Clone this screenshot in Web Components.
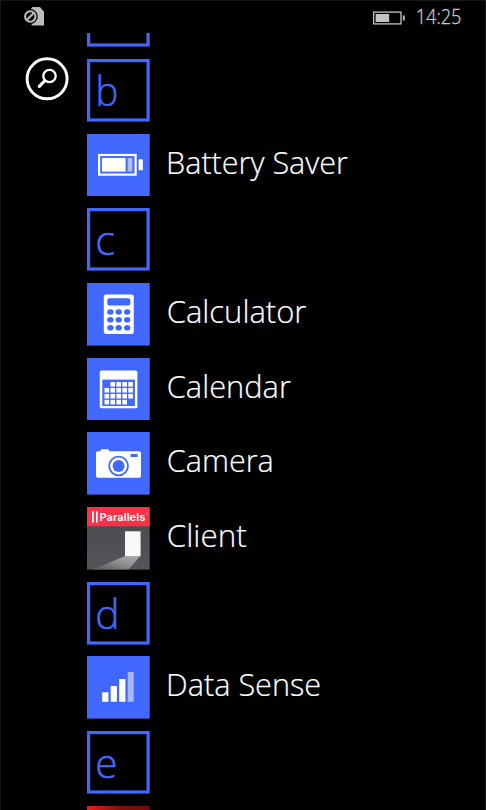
<!DOCTYPE html>
<html lang="en"><head><meta charset="utf-8"><title>Apps</title>
<style>html,body{margin:0;background:#000;height:100%;overflow:hidden}</style></head>
<body>
<phone-screen>
  <status-bar slot="status" time="14:25"></status-bar>
  <search-button slot="side"></search-button>
  <letter-tile></letter-tile>
  <letter-tile letter="b" x="11.3" w="18.2"></letter-tile>
  <app-row label="Battery Saver" x="19" w="178.7" icon="battery"></app-row>
  <letter-tile letter="c" x="10.3" w="16.6"></letter-tile>
  <app-row label="Calculator" w="138.5" icon="calculator"></app-row>
  <app-row label="Calendar" w="123" icon="calendar"></app-row>
  <app-row label="Camera" w="104.5" icon="camera"></app-row>
  <app-row label="Client" w="78.5" icon="client"></app-row>
  <letter-tile letter="d" x="10.3" w="19.4"></letter-tile>
  <app-row label="Data Sense" x="19" w="151" icon="data"></app-row>
  <letter-tile letter="e" x="10.3" w="18.2"></letter-tile>
  <app-row label="" icon="red"></app-row>
</phone-screen>
<script>
const BLUE = '#4068ff';
const dots = () => { let s = ''; for (const y of [29,36.8,44.8]) for (const x of [23.4,31.7,40.2]) s += `<ellipse cx="${x}" cy="${y}" rx="3.2" ry="2.8"/>`; return s; };
const days = () => { let s = ''; for (let r = 0; r < 4; r++) for (let c = 0; c < 5; c++) { if ((r === 0 && c === 0) || (r === 3 && c === 4)) continue; s += `<rect x="${17.5 + c*5.95}" y="${24 + r*5.95}" width="4.6" height="4.6"/>`; } return s; };
const blue = `<rect width="62.7" height="62.6" fill="${BLUE}"/>`;
const ICONS = {
  battery: `${blue}<rect x="12.1" y="21" width="36.5" height="19.6" fill="none" stroke="#fff" stroke-width="2.2"/><rect x="15" y="24" width="23.6" height="13.6" fill="#fff"/><rect x="40.6" y="24" width="4.8" height="13.6" fill="#abbcff"/><rect x="51.6" y="25.3" width="4.2" height="11" rx=".5" fill="#fff"/>`,
  calculator: `${blue}<rect x="16.8" y="11.4" width="30" height="39.6" rx="2.2" fill="#fff"/><g fill="${BLUE}"><rect x="20.3" y="15.2" width="23" height="7.4" rx="2"/>${dots()}</g>`,
  calendar: `${blue}<rect x="12.8" y="12.6" width="37.6" height="37.7" rx="1.6" fill="#fff"/><rect x="15.3" y="21.6" width="32.6" height="26.4" fill="${BLUE}"/><g fill="#fff">${days()}</g>`,
  camera: `${blue}<path fill="#fff" d="M10.7 19.3H13l1.4-2h6.8l1.4 2H52.2q1.8 0 1.8 1.8V44q0 1.8-1.8 1.8H10.8Q9 45.8 9 44V21.1q0-1.8 1.7-1.8z"/><circle cx="31.6" cy="34" r="9.4" fill="none" stroke="${BLUE}" stroke-width="1.8"/><circle cx="31.6" cy="34" r="6" fill="${BLUE}"/><rect x="43.6" y="22" width="7" height="3" fill="${BLUE}"/>`,
  client: `<defs><linearGradient id="wall" x1="0" y1="0" x2="0" y2="1"><stop stop-color="#49484d"/><stop offset="1" stop-color="#55545a"/></linearGradient><linearGradient id="beam" x1="1" y1="0" x2=".1" y2="1"><stop stop-color="#b0aeb0"/><stop offset=".55" stop-color="#8a898c"/><stop offset="1" stop-color="#5b5a5f"/></linearGradient></defs>
    <rect width="62.7" height="62.6" fill="url(#wall)"/><rect width="62.7" height="19.3" fill="#fd3048"/>
    <path d="M38.2 49 6 62.6H41.5L53.3 49z" fill="url(#beam)"/><rect x="38" y="24.3" width="15.6" height="24.7" fill="#f8f8f8"/>
    <path d="M5.9 4.2V15.8M9.8 4.2V15.8" stroke="#fff" stroke-width="1.7"/>
    <text x="12.5" y="14" font-family="Inter,'Liberation Sans',sans-serif" font-size="11" font-weight="600" fill="#fff" textLength="45.8" lengthAdjust="spacingAndGlyphs">Parallels</text><circle cx="59.6" cy="6.4" r=".8" fill="none" stroke="#ffb0b8" stroke-width=".5"/>`,
  data: `${blue}<g fill="#fff"><rect x="15.2" y="36.3" width="6.2" height="9.5"/><rect x="23.7" y="30" width="6.2" height="15.8"/><rect x="32.2" y="23" width="6.2" height="22.8"/><rect x="40.7" y="16" width="6" height="29.8" fill="#a6b8ff"/></g>`,
  red: `<defs><linearGradient id="r"><stop stop-color="#ef1c1c"/><stop offset=".55" stop-color="#7d0d0f"/><stop offset="1" stop-color="#6c0d0e"/></linearGradient></defs><rect width="62.7" height="62.6" fill="url(#r)"/>`
};
const FONT = `font-family="'Open Sans','Noto Sans',sans-serif" font-weight="300"`;
/* Stretches a label so that its ink spans exactly the given width. */
const label = (t, x, y, size, w, fill, sw) => t ? `<text class="fit" data-x="${x}" data-w="${w}" y="${y}" ${FONT} font-size="${size}" fill="${fill}" stroke="${fill}" stroke-width="${sw}">${t}</text>` : '';
const ctx = document.createElement('canvas').getContext('2d');
function fit(root, size) {
  for (const t of root.querySelectorAll('.fit')) {
    ctx.font = `300 ${size}px "Open Sans","Noto Sans",sans-serif`;
    const m = ctx.measureText(t.textContent);
    const k = t.dataset.w / (m.actualBoundingBoxRight + m.actualBoundingBoxLeft);
    t.setAttribute('transform', `translate(${+t.dataset.x + m.actualBoundingBoxLeft * k} 0) scale(${k} 1)`);
  }
}
customElements.define('phone-screen', class extends HTMLElement {
  constructor() { super(); this.attachShadow({mode:'open'}).innerHTML = `<style>
    :host{display:flex;flex-direction:column;width:486px;height:810px;background:#000;box-sizing:border-box;overflow:hidden;box-shadow:inset 1px 1px #151515,inset -1px 0 #151515}
    .body{display:grid;grid-template-columns:87.2px 1fr;height:777px;overflow:hidden}
    .list{display:flex;flex-direction:column;gap:12.07px;margin-top:-48.7px}
    </style><slot name="status"></slot><div class="body"><div><slot name="side"></slot></div><div class="list"><slot></slot></div></div>`; }
});
customElements.define('status-bar', class extends HTMLElement {
  connectedCallback() { this.attachShadow({mode:'open'}).innerHTML = `<style>
    :host{display:flex;justify-content:space-between;height:33px;flex:none;padding:0 24px}svg{display:block}</style>
    <svg width="22" height="33"><path d="M8.5 7H16l4 4.8V25.5H8.5L6.8 23.8A8 8 0 0 0 6.5 9.5z" fill="#bdbdbd"/><circle cx="6.3" cy="16.5" r="7.4" fill="#000"/><circle cx="6.3" cy="16.5" r="5.2" fill="none" stroke="#bdbdbd" stroke-width="2"/><path d="m3.3 19.5 6-6" stroke="#bdbdbd" stroke-width="2"/></svg>
    <svg width="90" height="33"><rect x="1.6" y="12.1" width="27.4" height="11.8" fill="none" stroke="#c4c4c4" stroke-width="1.3"/><rect x="3.6" y="14" width="13.6" height="8" fill="#c4c4c4"/><rect x="30.8" y="15.5" width="2" height="5" fill="#b5b5b5"/>${label(this.getAttribute('time'),44.6,24.3,19.2,44,'#c8c8c8',.3)}</svg>`; fit(this.shadowRoot, 19.2); }
});
customElements.define('search-button', class extends HTMLElement {
  constructor() { super(); this.attachShadow({mode:'open'}).innerHTML = `<style>:host{display:block;padding:23px 0 0 24px}svg{display:block}</style>
    <svg width="46" height="46" fill="none" stroke="#fff"><circle cx="23.1" cy="22.8" r="20" stroke-width="2.9"/><circle cx="25.5" cy="20" r="6.2" stroke-width="2.3"/><path d="m20.6 25-5.3 5.4" stroke-width="3.2" stroke-linecap="round"/></svg>`; }
});
customElements.define('letter-tile', class extends HTMLElement {
  connectedCallback() { this.attachShadow({mode:'open'}).innerHTML = `<style>:host{display:block;height:62.6px;flex:none}svg{display:block;overflow:visible}</style>
    <svg width="62.7" height="62.6"><rect x="1.6" y="1.6" width="59.5" height="59.4" fill="none" stroke="${BLUE}" stroke-width="3.2"/>${label(this.getAttribute('letter'),this.getAttribute('x'),47.4,40,this.getAttribute('w'),BLUE,.5)}</svg>`; fit(this.shadowRoot, 40); }
});
customElements.define('app-row', class extends HTMLElement {
  connectedCallback() { this.attachShadow({mode:'open'}).innerHTML = `<style>:host{display:flex;height:62.6px;flex:none}svg{display:block;flex:none}</style>
    <svg width="62.7" height="62.6">${ICONS[this.getAttribute('icon')]}</svg>
    <svg width="300" height="62.6">${label(this.getAttribute('label'),this.getAttribute('x')||17.7,40.5,31.4,this.getAttribute('w'),'#fff',.2)}</svg>`; fit(this.shadowRoot, 31.4); }
});
</script>
</body></html>
